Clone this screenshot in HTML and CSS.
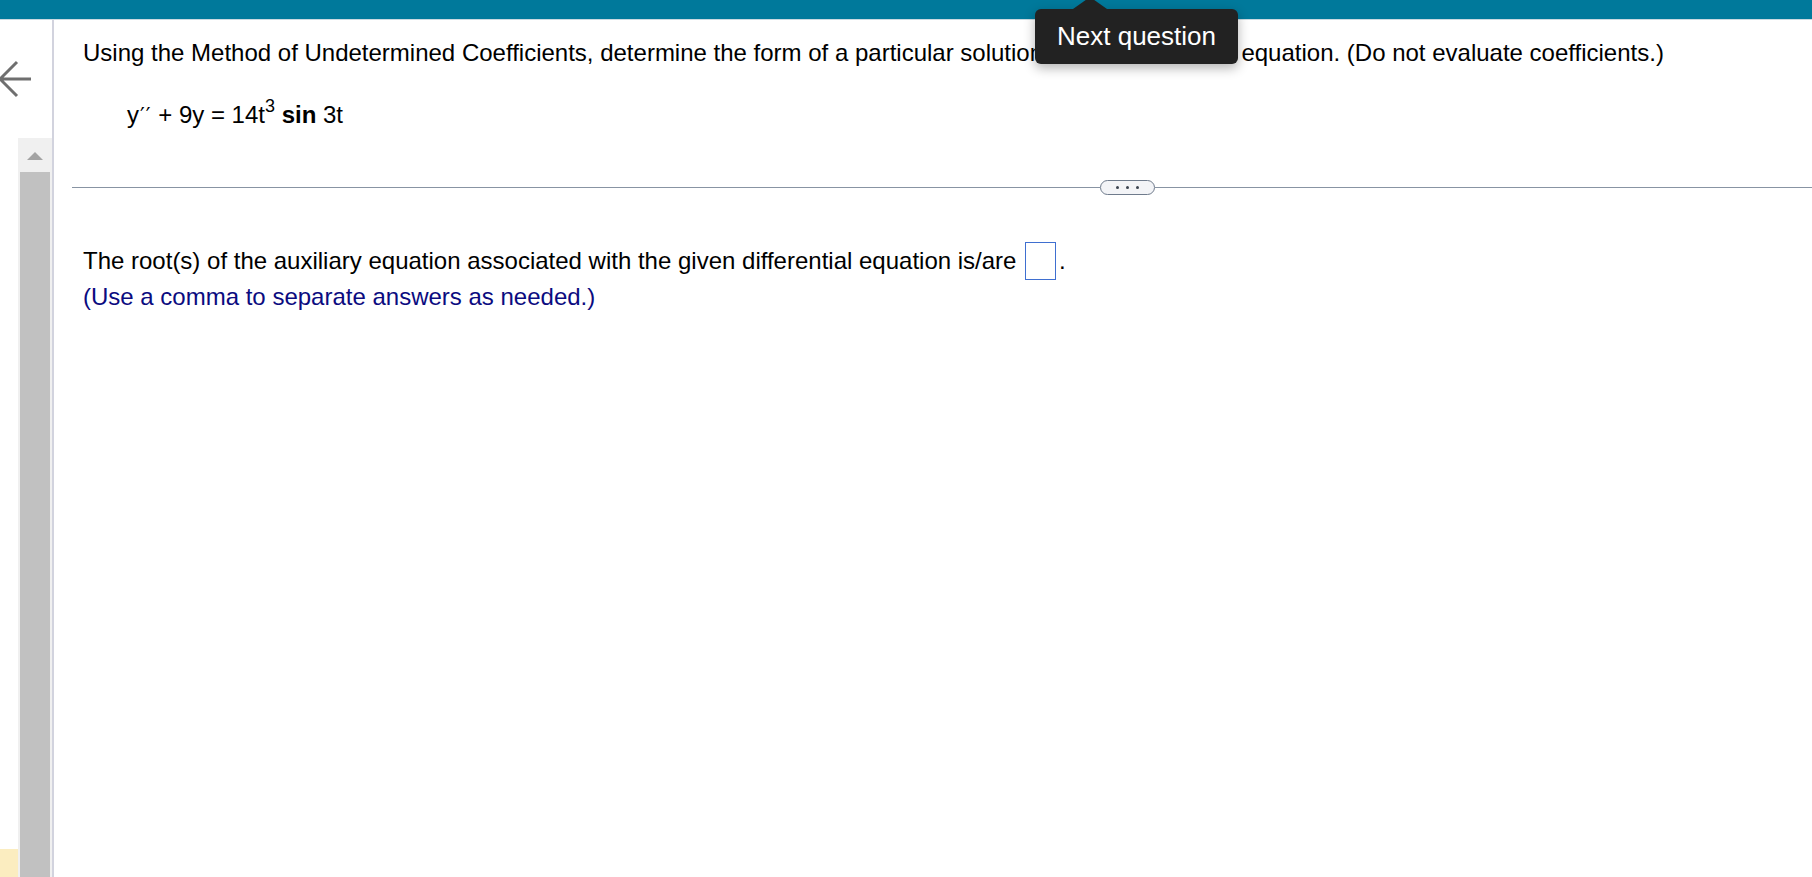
FILE: index.html
```html
<!DOCTYPE html>
<html>
<head>
<meta charset="utf-8">
<link rel="stylesheet" href="styles.css">
</head>
<body>
<div class="topbar"></div>
<div class="layout">
  <aside class="rail">
    <div class="back">
      <svg width="34" height="40" viewBox="0 0 34 40"><path d="M1 20 H32 M18 3 L1 20 L18 37" fill="none" stroke="#6f6f6f" stroke-width="3"/></svg>
    </div>
    <div class="track">
      <div class="up"></div>
      <div class="thumb"></div>
    </div>
    <div class="note"></div>
  </aside>
  <div class="divider"></div>
  <main class="content">
    <p class="prompt">Using the Method of Undetermined Coefficients, determine the form of a particular solution for the differential equation. (Do not evaluate coefficients.)</p>
    <p class="equation">y<span class="prime">′′</span> + 9y = 14t<sup>3</sup> <b>sin</b> 3t</p>
    <div class="sep">
      <div class="rule left"></div>
      <div class="pill"><span></span><span></span><span></span></div>
      <div class="rule right"></div>
    </div>
    <p class="answer">The root(s) of the auxiliary equation associated with the given differential equation is/are <span class="box"></span>.</p>
    <p class="hint">(Use a comma to separate answers as needed.)</p>
  </main>
</div>
<div class="tooltip">Next question</div>
</body>
</html>
```
FILE: styles.css
```css
html, body {
  margin: 0;
  padding: 0;
  background: #fff;
  overflow: hidden;
}
body {
  font-family: "Liberation Sans", Arial, sans-serif;
  color: #000;
  width: 1812px;
  height: 877px;
}
.topbar {
  height: 19px;
  background: #00799b;
  border-bottom: 1px solid #c9d9e0;
}
.layout {
  display: flex;
  height: 857px;
}
.rail {
  width: 52px;
  display: flex;
  flex-direction: column;
  position: relative;
}
.back {
  height: 118px;
  padding-top: 39px;
  box-sizing: border-box;
}
.back svg {
  display: block;
  margin-left: -1px;
}
.track {
  flex: 1;
  margin-left: 18px;
  background: #f0f0f0;
  display: flex;
  flex-direction: column;
  align-items: center;
}
.up {
  width: 0;
  height: 0;
  border-left: 8px solid transparent;
  border-right: 8px solid transparent;
  border-bottom: 8px solid #a3a3a3;
  margin-top: 14px;
}
.thumb {
  margin-top: 12px;
  width: 30px;
  flex: 1;
  background: #c1c1c1;
}
.note {
  position: absolute;
  left: 0;
  bottom: 0;
  width: 18px;
  height: 28px;
  background: #fbedc0;
}
.divider {
  width: 2px;
  background: #d2d3de;
}
.content {
  flex: 1;
  padding: 18px 0 0 18px;
}
.prompt, .equation, .answer, .hint {
  margin: 0 0 0 11px;
  font-size: 24px;
  line-height: 30px;
  white-space: nowrap;
}
.equation {
  margin-top: 32px;
  margin-left: 55px;
}
.prime {
  font-family: "DejaVu Sans", sans-serif;
  font-size: 21px;
  letter-spacing: 1px;
  margin-left: 1px;
}
.equation sup {
  font-size: 18px;
  line-height: 0;
  vertical-align: 11px;
}
.sep {
  display: flex;
  align-items: center;
  margin-top: 48px;
  height: 16px;
}
.rule {
  height: 1px;
  background: #8894a3;
}
.rule.left {
  width: 1028px;
}
.rule.right {
  flex: 1;
}
.pill {
  width: 55px;
  height: 15px;
  border: 1.5px solid #6f7b8c;
  border-radius: 8px;
  background: #f3f4f7;
  display: flex;
  align-items: center;
  justify-content: center;
  gap: 7px;
  box-sizing: border-box;
}
.pill span {
  width: 3px;
  height: 3px;
  border-radius: 50%;
  background: #3c4450;
}
.answer {
  margin-top: 47px;
}
.box {
  display: inline-block;
  width: 29px;
  height: 36px;
  border: 1px solid #3f6fd0;
  vertical-align: -11px;
  margin-left: 2px;
  margin-right: 3px;
}
.hint {
  margin-top: 2px;
  color: #0b0b80;
}
.tooltip {
  position: absolute;
  left: 1035px;
  top: 9px;
  width: 203px;
  height: 55px;
  background: #222;
  color: #fff;
  border-radius: 6px;
  font-size: 26px;
  display: flex;
  align-items: center;
  justify-content: center;
  box-shadow: 0 4px 12px rgba(0, 0, 0, 0.3);
}
.tooltip::before {
  content: "";
  position: absolute;
  left: 38px;
  top: -12px;
  border-left: 17px solid transparent;
  border-right: 17px solid transparent;
  border-bottom: 12px solid #222;
}
```
